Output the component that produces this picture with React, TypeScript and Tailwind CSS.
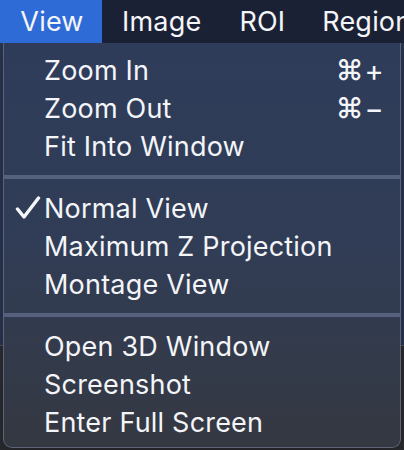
import React from 'react';

type Item = { label: string; shortcut?: string; checked?: boolean };

const groups: Item[][] = [
  [
    { label: 'Zoom In', shortcut: '+' },
    { label: 'Zoom Out', shortcut: '−' },
    { label: 'Fit Into Window' },
  ],
  [
    { label: 'Normal View', checked: true },
    { label: 'Maximum Z Projection' },
    { label: 'Montage View' },
  ],
  [{ label: 'Open 3D Window' }, { label: 'Screenshot' }, { label: 'Enter Full Screen' }],
];

const Check = () => (
  <svg width="26" height="24" viewBox="0 0 26 24" className="absolute left-[11px] top-[7px]">
    <path d="M2.5 13 L9 21 L23.5 2" fill="none" stroke="#f4f5f8" strokeWidth="3.4" strokeLinecap="round" strokeLinejoin="round" />
  </svg>
);

const App: React.FC = () => {
  return (
    <div
      className="relative w-[404px] h-[450px] overflow-hidden bg-[#1b2135] text-[#f4f5f8]"
      style={{ fontFamily: 'Inter, "Noto Sans", sans-serif' }}
    >
      {/* Menu bar */}
      <div className="flex h-[43px] items-center text-[27px] leading-none tracking-[0.2px]">
        <div className="flex h-full w-[102px] shrink-0 items-center justify-center bg-[#2f6bd6] pl-[2px]">View</div>
        <div className="pl-[20px]">Image</div>
        <div className="pl-[38px]">ROI</div>
        <div className="pl-[37px] whitespace-nowrap">Region</div>
      </div>

      {/* window content behind the menu */}
      <div className="h-[302px] bg-[#27324b]" />
      <div className="h-[105px] border-t border-[#4a4d55] bg-[#28292d]" />

      {/* Dropdown */}
      <div className="absolute left-[3px] top-[43px] w-[398px] h-[405px] rounded-b-[9px] border border-t-0 border-[#5d6477] bg-gradient-to-b from-[#2e3c5a] via-[#313d56] to-[#343841] pt-[8px] shadow-lg">
        {groups.map((g, gi) => (
          <div key={gi}>
            {gi > 0 && (
              <div className="flex h-[24px] items-center">
                <div className="h-[4px] w-full bg-[#56627d]" />
              </div>
            )}
            {g.map((it) => (
              <div key={it.label} className="relative flex h-[38px] items-center pl-[40px] pr-[16px] text-[27px] leading-none tracking-[0.2px]">
                {it.checked && <Check />}
                <span className="flex-1 whitespace-nowrap">{it.label}</span>
                {it.shortcut && (
                  <span className="flex items-center gap-[1px]">
                    <span className="text-[28px] font-medium">⌘</span>
                    <span className="text-[29px]">{it.shortcut}</span>
                  </span>
                )}
              </div>
            ))}
          </div>
        ))}
      </div>
    </div>
  );
};

export default App;
